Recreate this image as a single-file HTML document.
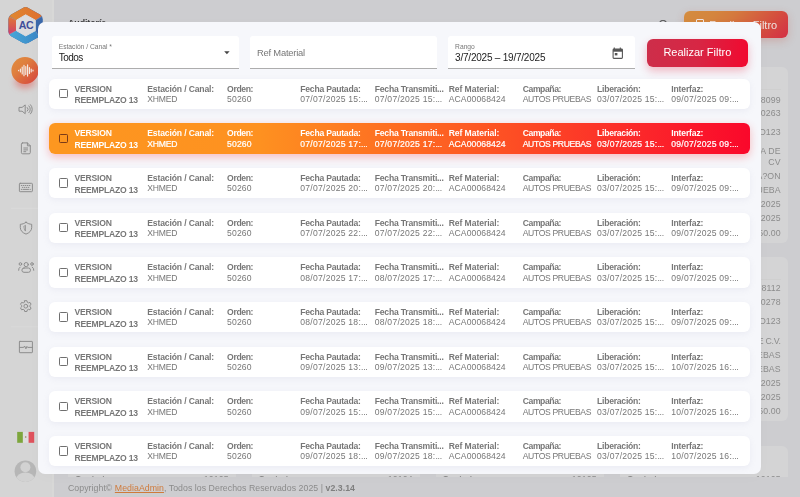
<!DOCTYPE html>
<html lang="es">
<head>
<meta charset="utf-8">
<title>Auditoría</title>
<style>
*{box-sizing:border-box;margin:0;padding:0}
html,body{width:800px;height:497px;overflow:hidden}
body{position:relative;background:#cdcdd0;font-family:"Liberation Sans",sans-serif;color:#777}
.side{position:absolute;left:0;top:0;width:54px;height:497px;background:#d5d5d5;border-right:2px solid #d8d8d7}
.content-bg{position:absolute;left:54px;top:0;width:746px;height:497px;background:#cdcdd0}
.title{will-change:transform;position:absolute;left:68.2px;top:17.3px;font-size:8.8px;line-height:12px;font-weight:700;color:#3c3c3e;letter-spacing:-.05px}
.bgbtn{will-change:transform;position:absolute;left:683.5px;top:11px;width:104.2px;height:27px;border-radius:6px;background:linear-gradient(135deg,#d48c3e 0%,#d4853e 25%,#d4783e 42%,#d4503e 73%,#d43e42 87%,#d43044 100%);box-shadow:0 3px 8px rgba(200,80,60,.25);color:#eee3e0;font-size:11px;line-height:28.8px;text-align:right;padding-right:11px}
.bgbtn i{position:absolute;left:12px;top:8px;width:8px;height:9px;border:1px solid #eee3e0;border-radius:1px}
.srch{position:absolute;left:659.4px;top:19.8px;width:7.4px;height:7.4px;border:1.3px solid #3c3c3e;border-radius:50%}
.card{will-change:transform;position:absolute;background:#d4d4d5;border-radius:6px}
.card span{position:absolute;right:7.3px;font-size:8.75px;line-height:10px;color:#8c8c8c;white-space:nowrap;letter-spacing:.1px}
.card span.n{letter-spacing:-.25px}
.card b{position:absolute;top:27.9px;font-size:8.75px;line-height:10px;color:#868686;letter-spacing:-.2px}
.card u{position:absolute;left:7px;right:7px;height:1px;background:#cfcfcf}
.footer{will-change:transform;position:absolute;left:54px;top:477.4px;width:746px;height:20px;background:#cdcdd0}
.footer p{position:absolute;left:14px;top:5.8px;font-size:8.75px;line-height:10px;color:#8b8b8b;white-space:nowrap;letter-spacing:.047px}
.footer b{color:#7f7f7f}
.footer a{color:#cf7a3a;text-decoration:underline}
.modal{will-change:transform;position:absolute;left:38.3px;top:22.25px;width:723px;height:451.7px;background:#f6f7fb;border-radius:7px;box-shadow:0 3px 14px rgba(0,0,0,.02);overflow:hidden}
.fld{position:absolute;top:13.75px;height:33px;width:187px;background:#fff;border-radius:3px 3px 0 0;border-bottom:1px solid #adadad}
.fld .lab{position:absolute;left:7px;top:6.8px;font-size:6.7px;line-height:8px;color:#777;white-space:nowrap}
.fld .val{position:absolute;left:7px;top:16px;font-size:10px;line-height:12px;color:#222;white-space:nowrap;letter-spacing:-.22px}
.fld .ph{position:absolute;left:7px;top:11.6px;font-size:9.4px;line-height:12px;color:#777;white-space:nowrap;letter-spacing:-.22px}
.btn{position:absolute;left:608.7px;top:17px;width:101.3px;height:28px;border-radius:6px;background:linear-gradient(98deg,#cd2e4a 0%,#d72644 50%,#f2082f 100%);box-shadow:0 4px 9px rgba(225,40,70,.3);color:#fff;font-size:11px;line-height:27.5px;text-align:center}
.row{position:absolute;left:10.7px;width:701px;height:30.6px;background:#fff;border-radius:6px;box-shadow:0 2px 6px rgba(160,160,190,.12)}
.row.sel{background:linear-gradient(90deg,#fd9720 0%,#fe9120 30%,#fe6c22 50%,#fd4d24 66.5%,#fc2a2a 83%,#fa082b 100%);box-shadow:0 3px 9px rgba(250,60,65,.32)}
.cb{position:absolute;left:10px;top:10.6px;width:9.2px;height:9.2px;border:1.1px solid #6f6f6f;border-radius:1.3px}
.sel .cb{border-color:#7a3a18}
.t{position:absolute;font-size:8.6px;line-height:10px;white-space:pre;color:#777;font-weight:700}
.t.v{font-weight:400;color:#777}
.sel .t,.sel .t.v{color:#fff}
.sel .t.v{-webkit-text-stroke:.22px #fff}
.t s{text-decoration:none;letter-spacing:-.25px}
</style>
</head>
<body>
<div class="side"><svg class="sidesvg" width="54" height="497" viewBox="0 0 54 497">
<defs>
<linearGradient id="gL" x1="0" y1="0" x2="0" y2="1"><stop offset="0" stop-color="#df7f33"/><stop offset=".55" stop-color="#d8584f"/><stop offset="1" stop-color="#c9377f"/></linearGradient>
<linearGradient id="gT" x1="0" y1="0" x2="1" y2="0"><stop offset="0" stop-color="#e08a30"/><stop offset="1" stop-color="#df6d2f"/></linearGradient>
<linearGradient id="gB" x1="0" y1="0" x2="1" y2="0"><stop offset="0" stop-color="#49abd9"/><stop offset="1" stop-color="#3a86c6"/></linearGradient>
<linearGradient id="gA" x1="0" y1="0" x2="1" y2="1"><stop offset="0" stop-color="#e18d3f"/><stop offset=".35" stop-color="#df803e"/><stop offset="1" stop-color="#d6413e"/></linearGradient>
<filter id="bl" x="-50%" y="-50%" width="200%" height="200%"><feGaussianBlur stdDeviation="3"/></filter>
</defs>
<!-- logo -->
<clipPath id="hx"><path d="M22.82 7.88 Q25.60 6.30 28.38 7.88 L40.02 14.52 Q42.80 16.10 42.80 19.30 L42.80 31.50 Q42.80 34.70 40.01 36.27 L28.39 42.83 Q25.60 44.40 22.81 42.83 L11.19 36.27 Q8.40 34.70 8.40 31.50 L8.40 19.30 Q8.40 16.10 11.18 14.52 Z"/></clipPath>
<g clip-path="url(#hx)">
<rect x="6" y="4" width="40" height="42" fill="#3a68aa"/>
<path d="M6 14 L25.6 3 L45 14 L35.2 20.3 L25.6 15 L16.6 20.3 Z" fill="url(#gT)"/>
<path d="M6 14.6 L16.6 20.3 L16.6 30.6 L6 36.500 Z" fill="url(#gL)"/>
<path d="M6 36.400 L16.600 30.600 L25.600 35.700 L35.200 30.600 L39.500 37 L25.600 46 Z" fill="url(#gB)"/>
<path d="M8.400 16.100 L16.600 20.300 M8.400 34.700 L16.600 30.600 M35.200 20.300 L42.800 16.100 M35.200 30.600 L39.300 36.800" stroke="#e8c8b8" stroke-opacity=".35" stroke-width=".7" fill="none"/>
</g>
<path d="M25.600 14.800 L35.300 20.200 L35.300 30.700 L25.600 35.900 L16.500 30.700 L16.500 20.200 Z" fill="#dcdcde" stroke="#dcdcde" stroke-width="1" stroke-linejoin="round"/>
<text x="25.900" y="29.100" text-anchor="middle" font-family="Liberation Sans, sans-serif" font-weight="700" font-size="10.600" letter-spacing="-0.400" fill="#3f4e9a">AC</text>
<!-- active item -->
<ellipse cx="25" cy="82" rx="10.500" ry="6.500" fill="#e0605a" opacity=".55" filter="url(#bl)"/>
<circle cx="25" cy="70.500" r="13.600" fill="url(#gA)"/>
<g stroke="#f5ebe6" stroke-width="1.150" stroke-linecap="round">
<path d="M18.600 70.400v.300M20.400 69.100v2.800M22.200 67v7M24 65.200v10.600M25.800 66.500v8M27.600 64.900v11.200M29.400 67.600v5.800M31.200 69v3M33 70.100v.800"/>
</g>
<!-- icons -->
<g fill="none" stroke="#8d8d8d" stroke-width="1" stroke-linejoin="round" stroke-linecap="round">
<!-- speaker -->
<path d="M19.400 107.400h2.700l3.100-2.500v8.800l-3.100-2.500h-2.700z"/>
<path d="M27.300 107.500a2.400 2.400 0 0 1 0 3.600M28.900 105.900a4.600 4.600 0 0 1 0 6.800M30.500 104.700a6.600 6.600 0 0 1 0 9.200"/>
<!-- document -->
<path d="M22.6 142.9h4.8l2.9 2.9v6.8a1.2 1.2 0 0 1-1.2 1.200h-6.500a1.200 1.200 0 0 1-1.200-1.200v-8.500a1.200 1.200 0 0 1 1.200-1.200z"/>
<path d="M27.400 142.900v2.900h2.900M23.800 148h3.800M23.800 149.900h3.800M23.800 151.700h2"/>
<!-- keyboard -->
<rect x="19.400" y="183.300" width="13" height="8.400" rx=".8"/>
<path d="M21.300 185.500h.6M23.300 185.500h.6M25.300 185.500h.6M27.300 185.500h.6M29.300 185.500h.6M22.300 187.400h.6M24.300 187.400h.6M26.300 187.400h.6M28.300 187.400h.6M21.300 189.400h.4M23 189.400h5.500M30 189.400h.4"/>
<!-- shield -->
<path d="M26 222.300c1.800 1.300 3.700 1.900 5.700 2v3.200c0 3.100-2.300 5.400-5.700 6.600-3.400-1.200-5.700-3.500-5.700-6.600v-3.200c2-.1 3.900-.7 5.700-2z"/>
<path d="M24.200 226.100c.5-.2 1-.5 1.300-.8v5.800c-.8-.6-1.300-1.500-1.300-2.500z" stroke-width=".8"/>
<!-- users -->
<circle cx="26.200" cy="264.600" r="2.100"/>
<circle cx="20.400" cy="264" r="1.300"/>
<circle cx="32" cy="264" r="1.300"/>
<rect x="21.900" y="268" width="8.600" height="4.300" rx="2.100"/>
<path d="M18.600 270.300a3.400 3.400 0 0 1 1.500-3.200M33.800 270.300a3.400 3.400 0 0 0-1.500-3.200"/>
<!-- gear -->
<circle cx="25.800" cy="306.200" r="1.900"/>
<path d="M24.700 300.700h2.200l.4 1.600 1.100.6 1.600-.5 1.100 1.900-1.200 1.100v1.400l1.200 1.100-1.100 1.900-1.600-.5-1.100.6-.4 1.600h-2.200l-.4-1.600-1.100-.6-1.600.5-1.100-1.900 1.200-1.100v-1.400l-1.200-1.100 1.100-1.900 1.600.5 1.100-.6z"/>
<!-- monitor -->
<rect x="19.400" y="341.400" width="13" height="11.300" rx=".5"/>
<path d="M19.400 347.400h4.300l.9-1.400 1.300 2.800 1-2.400.7 1h4.800"/>
</g>
<path d="M11 208.300H54M11 326.800H54" stroke="#dcdcdc" stroke-width=".7"/>
<!-- flag -->
<rect x="17.200" y="431.900" width="5.700" height="10.900" fill="#7da63c"/>
<rect x="22.900" y="431.900" width="5.700" height="10.900" fill="#dedede"/>
<rect x="28.600" y="431.900" width="5.600" height="10.900" fill="#df525c"/>
<circle cx="25.700" cy="437" r=".8" fill="#9a7a55"/>
<!-- avatar -->
<clipPath id="av"><circle cx="25.400" cy="471.200" r="10.800"/></clipPath>
<circle cx="25.400" cy="471.200" r="10.800" fill="#b6b6b6"/>
<g clip-path="url(#av)" fill="#d2d2d2"><circle cx="25.400" cy="467.300" r="5"/><ellipse cx="25.400" cy="483.600" rx="11" ry="11"/></g>
</svg>
</div>
<div class="content-bg"></div>
<div class="title">Auditoría</div>
<div class="srch"></div>
<div class="bgbtn"><i></i>Realizar Filtro</div>

<div class="card" style="left:620px;top:66.5px;width:168px;height:176px"><u style="top:21.5px"></u><span style="top:27.7px">8099</span><span style="top:41.3px">0263</span><span style="top:60.3px">D123</span><span style="top:79.0px">A DE</span><span style="top:89.5px">CV</span><span style="top:103.9px">A?ON</span><span style="top:118.1px">UEBA</span><span style="top:132.3px">2025</span><span style="top:145.6px">2025</span><span style="top:160.5px">50.00</span></div>
<div class="card" style="left:620px;top:257.2px;width:168px;height:164.4px"><u style="top:21.5px"></u><span style="top:26.2px">8112</span><span style="top:40.3px">0278</span><span style="top:59.1px">D123</span><span class="n" style="top:79.3px">E C.V.</span><span style="top:93.4px">EBAS</span><span style="top:107.2px">EBAS</span><span style="top:121.3px">2025</span><span style="top:135.1px">2025</span><span style="top:149.2px">50.00</span></div>
<div class="card" style="left:68px;top:446.3px;width:168px;height:40px"><b style="left:7px">Contrato</b><span style="top:27.9px">10105</span></div>
<div class="card" style="left:252px;top:446.3px;width:168px;height:40px"><b style="left:6.5px">Contrato</b><span style="top:27.9px">10104</span></div>
<div class="card" style="left:436px;top:446.3px;width:168px;height:40px"><b style="left:6.5px">Contrato</b><span style="top:27.9px">10105</span></div>
<div class="card" style="left:620px;top:446.3px;width:168px;height:40px"><b style="left:7px">Contrato</b><span style="top:27.9px">10105</span></div>
<div class="footer"><p>Copyright© <a>MediaAdmin</a>, Todos los Derechos Reservados 2025 | <b>v2.3.14</b></p></div>

<div class="modal">
  <div class="fld" style="left:13.7px"><span class="lab">Estación / Canal *</span><span class="val" style="letter-spacing:-.5px">Todos</span><svg style="position:absolute;left:172.600px;top:15.200px" width="6" height="4" viewBox="0 0 6 4"><path d="M.2.300h5.400L2.900 3.300z" fill="#444"/></svg></div>
  <div class="fld" style="left:212px"><span class="ph">Ref Material</span></div>
  <div class="fld" style="left:410.100px"><span class="lab">Rango</span><span class="val">3/7/2025 – 19/7/2025</span><svg style="position:absolute;left:163.500px;top:11.200px" width="12" height="13" viewBox="0 0 12 13"><path d="M2.300.600v1.600M8.300.600v1.600" stroke="#555" stroke-width="1.100"/><rect x="1.100" y="2.100" width="9.300" height="9.300" rx=".8" fill="none" stroke="#555" stroke-width="1.100"/><rect x="1.100" y="2.100" width="9.300" height="2.600" fill="#555"/><rect x="2.800" y="6" width="2.600" height="2.400" fill="#555"/></svg></div>
  <div class="btn">Realizar Filtro</div>
<div class="row" style="top:56.50px"><i class="cb"></i><b class="t" style="left:25.75px;top:5.2px;letter-spacing:-0.188px">VERSION</b><b class="t" style="left:25.75px;top:16.9px;letter-spacing:-0.213px">REEMPLAZO 13</b><b class="t" style="left:98.60px;top:5.2px;letter-spacing:-0.147px">Estación / Canal:</b><span class="t v" style="left:98.60px;top:15.6px;letter-spacing:-0.213px">XHMED</span><b class="t" style="left:178.40px;top:5.2px;letter-spacing:-0.365px">Orden:</b><span class="t v" style="left:178.40px;top:15.6px;letter-spacing:0.137px">50260</span><b class="t" style="left:251.60px;top:5.2px;letter-spacing:-0.227px">Fecha Pautada:</b><span class="t v" style="left:251.60px;top:15.6px;letter-spacing:0.243px">07/07/2025 15:<s>...</s></span><b class="t" style="left:326.00px;top:5.2px;letter-spacing:-0.203px">Fecha Transmiti...</b><span class="t v" style="left:326.00px;top:15.6px;letter-spacing:0.243px">07/07/2025 15:<s>...</s></span><b class="t" style="left:400.00px;top:5.2px;letter-spacing:-0.078px">Ref Material:</b><span class="t v" style="left:400.00px;top:15.6px;letter-spacing:0.095px">ACA00068424</span><b class="t" style="left:474.00px;top:5.2px;letter-spacing:-0.399px">Campaña:</b><span class="t v" style="left:474.00px;top:15.6px;letter-spacing:-0.351px">AUTOS PRUEBAS</span><b class="t" style="left:548.40px;top:5.2px;letter-spacing:-0.251px">Liberación:</b><span class="t v" style="left:548.40px;top:15.6px;letter-spacing:0.215px">03/07/2025 15:<s>...</s></span><b class="t" style="left:622.60px;top:5.2px;letter-spacing:-0.163px">Interfaz:</b><span class="t v" style="left:622.60px;top:15.6px;letter-spacing:0.243px">09/07/2025 09:<s>...</s></span></div>
<div class="row sel" style="top:101.17px"><i class="cb"></i><b class="t" style="left:25.75px;top:5.2px;letter-spacing:-0.188px">VERSION</b><b class="t" style="left:25.75px;top:16.9px;letter-spacing:-0.213px">REEMPLAZO 13</b><b class="t" style="left:98.60px;top:5.2px;letter-spacing:-0.147px">Estación / Canal:</b><span class="t v" style="left:98.60px;top:15.6px;letter-spacing:-0.213px">XHMED</span><b class="t" style="left:178.40px;top:5.2px;letter-spacing:-0.365px">Orden:</b><span class="t v" style="left:178.40px;top:15.6px;letter-spacing:0.137px">50260</span><b class="t" style="left:251.60px;top:5.2px;letter-spacing:-0.227px">Fecha Pautada:</b><span class="t v" style="left:251.60px;top:15.6px;letter-spacing:0.243px">07/07/2025 17:<s>...</s></span><b class="t" style="left:326.00px;top:5.2px;letter-spacing:-0.203px">Fecha Transmiti...</b><span class="t v" style="left:326.00px;top:15.6px;letter-spacing:0.243px">07/07/2025 17:<s>...</s></span><b class="t" style="left:400.00px;top:5.2px;letter-spacing:-0.078px">Ref Material:</b><span class="t v" style="left:400.00px;top:15.6px;letter-spacing:0.095px">ACA00068424</span><b class="t" style="left:474.00px;top:5.2px;letter-spacing:-0.399px">Campaña:</b><span class="t v" style="left:474.00px;top:15.6px;letter-spacing:-0.351px">AUTOS PRUEBAS</span><b class="t" style="left:548.40px;top:5.2px;letter-spacing:-0.251px">Liberación:</b><span class="t v" style="left:548.40px;top:15.6px;letter-spacing:0.215px">03/07/2025 15:<s>...</s></span><b class="t" style="left:622.60px;top:5.2px;letter-spacing:-0.163px">Interfaz:</b><span class="t v" style="left:622.60px;top:15.6px;letter-spacing:0.243px">09/07/2025 09:<s>...</s></span></div>
<div class="row" style="top:145.84px"><i class="cb"></i><b class="t" style="left:25.75px;top:5.2px;letter-spacing:-0.188px">VERSION</b><b class="t" style="left:25.75px;top:16.9px;letter-spacing:-0.213px">REEMPLAZO 13</b><b class="t" style="left:98.60px;top:5.2px;letter-spacing:-0.147px">Estación / Canal:</b><span class="t v" style="left:98.60px;top:15.6px;letter-spacing:-0.213px">XHMED</span><b class="t" style="left:178.40px;top:5.2px;letter-spacing:-0.365px">Orden:</b><span class="t v" style="left:178.40px;top:15.6px;letter-spacing:0.137px">50260</span><b class="t" style="left:251.60px;top:5.2px;letter-spacing:-0.227px">Fecha Pautada:</b><span class="t v" style="left:251.60px;top:15.6px;letter-spacing:0.243px">07/07/2025 20:<s>...</s></span><b class="t" style="left:326.00px;top:5.2px;letter-spacing:-0.203px">Fecha Transmiti...</b><span class="t v" style="left:326.00px;top:15.6px;letter-spacing:0.243px">07/07/2025 20:<s>...</s></span><b class="t" style="left:400.00px;top:5.2px;letter-spacing:-0.078px">Ref Material:</b><span class="t v" style="left:400.00px;top:15.6px;letter-spacing:0.095px">ACA00068424</span><b class="t" style="left:474.00px;top:5.2px;letter-spacing:-0.399px">Campaña:</b><span class="t v" style="left:474.00px;top:15.6px;letter-spacing:-0.351px">AUTOS PRUEBAS</span><b class="t" style="left:548.40px;top:5.2px;letter-spacing:-0.251px">Liberación:</b><span class="t v" style="left:548.40px;top:15.6px;letter-spacing:0.215px">03/07/2025 15:<s>...</s></span><b class="t" style="left:622.60px;top:5.2px;letter-spacing:-0.163px">Interfaz:</b><span class="t v" style="left:622.60px;top:15.6px;letter-spacing:0.243px">09/07/2025 09:<s>...</s></span></div>
<div class="row" style="top:190.51px"><i class="cb"></i><b class="t" style="left:25.75px;top:5.2px;letter-spacing:-0.188px">VERSION</b><b class="t" style="left:25.75px;top:16.9px;letter-spacing:-0.213px">REEMPLAZO 13</b><b class="t" style="left:98.60px;top:5.2px;letter-spacing:-0.147px">Estación / Canal:</b><span class="t v" style="left:98.60px;top:15.6px;letter-spacing:-0.213px">XHMED</span><b class="t" style="left:178.40px;top:5.2px;letter-spacing:-0.365px">Orden:</b><span class="t v" style="left:178.40px;top:15.6px;letter-spacing:0.137px">50260</span><b class="t" style="left:251.60px;top:5.2px;letter-spacing:-0.227px">Fecha Pautada:</b><span class="t v" style="left:251.60px;top:15.6px;letter-spacing:0.243px">07/07/2025 22:<s>...</s></span><b class="t" style="left:326.00px;top:5.2px;letter-spacing:-0.203px">Fecha Transmiti...</b><span class="t v" style="left:326.00px;top:15.6px;letter-spacing:0.243px">07/07/2025 22:<s>...</s></span><b class="t" style="left:400.00px;top:5.2px;letter-spacing:-0.078px">Ref Material:</b><span class="t v" style="left:400.00px;top:15.6px;letter-spacing:0.095px">ACA00068424</span><b class="t" style="left:474.00px;top:5.2px;letter-spacing:-0.399px">Campaña:</b><span class="t v" style="left:474.00px;top:15.6px;letter-spacing:-0.351px">AUTOS PRUEBAS</span><b class="t" style="left:548.40px;top:5.2px;letter-spacing:-0.251px">Liberación:</b><span class="t v" style="left:548.40px;top:15.6px;letter-spacing:0.215px">03/07/2025 15:<s>...</s></span><b class="t" style="left:622.60px;top:5.2px;letter-spacing:-0.163px">Interfaz:</b><span class="t v" style="left:622.60px;top:15.6px;letter-spacing:0.243px">09/07/2025 09:<s>...</s></span></div>
<div class="row" style="top:235.18px"><i class="cb"></i><b class="t" style="left:25.75px;top:5.2px;letter-spacing:-0.188px">VERSION</b><b class="t" style="left:25.75px;top:16.9px;letter-spacing:-0.213px">REEMPLAZO 13</b><b class="t" style="left:98.60px;top:5.2px;letter-spacing:-0.147px">Estación / Canal:</b><span class="t v" style="left:98.60px;top:15.6px;letter-spacing:-0.213px">XHMED</span><b class="t" style="left:178.40px;top:5.2px;letter-spacing:-0.365px">Orden:</b><span class="t v" style="left:178.40px;top:15.6px;letter-spacing:0.137px">50260</span><b class="t" style="left:251.60px;top:5.2px;letter-spacing:-0.227px">Fecha Pautada:</b><span class="t v" style="left:251.60px;top:15.6px;letter-spacing:0.243px">08/07/2025 17:<s>...</s></span><b class="t" style="left:326.00px;top:5.2px;letter-spacing:-0.203px">Fecha Transmiti...</b><span class="t v" style="left:326.00px;top:15.6px;letter-spacing:0.243px">08/07/2025 17:<s>...</s></span><b class="t" style="left:400.00px;top:5.2px;letter-spacing:-0.078px">Ref Material:</b><span class="t v" style="left:400.00px;top:15.6px;letter-spacing:0.095px">ACA00068424</span><b class="t" style="left:474.00px;top:5.2px;letter-spacing:-0.399px">Campaña:</b><span class="t v" style="left:474.00px;top:15.6px;letter-spacing:-0.351px">AUTOS PRUEBAS</span><b class="t" style="left:548.40px;top:5.2px;letter-spacing:-0.251px">Liberación:</b><span class="t v" style="left:548.40px;top:15.6px;letter-spacing:0.215px">03/07/2025 15:<s>...</s></span><b class="t" style="left:622.60px;top:5.2px;letter-spacing:-0.163px">Interfaz:</b><span class="t v" style="left:622.60px;top:15.6px;letter-spacing:0.243px">09/07/2025 09:<s>...</s></span></div>
<div class="row" style="top:279.85px"><i class="cb"></i><b class="t" style="left:25.75px;top:5.2px;letter-spacing:-0.188px">VERSION</b><b class="t" style="left:25.75px;top:16.9px;letter-spacing:-0.213px">REEMPLAZO 13</b><b class="t" style="left:98.60px;top:5.2px;letter-spacing:-0.147px">Estación / Canal:</b><span class="t v" style="left:98.60px;top:15.6px;letter-spacing:-0.213px">XHMED</span><b class="t" style="left:178.40px;top:5.2px;letter-spacing:-0.365px">Orden:</b><span class="t v" style="left:178.40px;top:15.6px;letter-spacing:0.137px">50260</span><b class="t" style="left:251.60px;top:5.2px;letter-spacing:-0.227px">Fecha Pautada:</b><span class="t v" style="left:251.60px;top:15.6px;letter-spacing:0.243px">08/07/2025 18:<s>...</s></span><b class="t" style="left:326.00px;top:5.2px;letter-spacing:-0.203px">Fecha Transmiti...</b><span class="t v" style="left:326.00px;top:15.6px;letter-spacing:0.243px">08/07/2025 18:<s>...</s></span><b class="t" style="left:400.00px;top:5.2px;letter-spacing:-0.078px">Ref Material:</b><span class="t v" style="left:400.00px;top:15.6px;letter-spacing:0.095px">ACA00068424</span><b class="t" style="left:474.00px;top:5.2px;letter-spacing:-0.399px">Campaña:</b><span class="t v" style="left:474.00px;top:15.6px;letter-spacing:-0.351px">AUTOS PRUEBAS</span><b class="t" style="left:548.40px;top:5.2px;letter-spacing:-0.251px">Liberación:</b><span class="t v" style="left:548.40px;top:15.6px;letter-spacing:0.215px">03/07/2025 15:<s>...</s></span><b class="t" style="left:622.60px;top:5.2px;letter-spacing:-0.163px">Interfaz:</b><span class="t v" style="left:622.60px;top:15.6px;letter-spacing:0.243px">09/07/2025 09:<s>...</s></span></div>
<div class="row" style="top:324.52px"><i class="cb"></i><b class="t" style="left:25.75px;top:5.2px;letter-spacing:-0.188px">VERSION</b><b class="t" style="left:25.75px;top:16.9px;letter-spacing:-0.213px">REEMPLAZO 13</b><b class="t" style="left:98.60px;top:5.2px;letter-spacing:-0.147px">Estación / Canal:</b><span class="t v" style="left:98.60px;top:15.6px;letter-spacing:-0.213px">XHMED</span><b class="t" style="left:178.40px;top:5.2px;letter-spacing:-0.365px">Orden:</b><span class="t v" style="left:178.40px;top:15.6px;letter-spacing:0.137px">50260</span><b class="t" style="left:251.60px;top:5.2px;letter-spacing:-0.227px">Fecha Pautada:</b><span class="t v" style="left:251.60px;top:15.6px;letter-spacing:0.243px">09/07/2025 13:<s>...</s></span><b class="t" style="left:326.00px;top:5.2px;letter-spacing:-0.203px">Fecha Transmiti...</b><span class="t v" style="left:326.00px;top:15.6px;letter-spacing:0.243px">09/07/2025 13:<s>...</s></span><b class="t" style="left:400.00px;top:5.2px;letter-spacing:-0.078px">Ref Material:</b><span class="t v" style="left:400.00px;top:15.6px;letter-spacing:0.095px">ACA00068424</span><b class="t" style="left:474.00px;top:5.2px;letter-spacing:-0.399px">Campaña:</b><span class="t v" style="left:474.00px;top:15.6px;letter-spacing:-0.351px">AUTOS PRUEBAS</span><b class="t" style="left:548.40px;top:5.2px;letter-spacing:-0.251px">Liberación:</b><span class="t v" style="left:548.40px;top:15.6px;letter-spacing:0.215px">03/07/2025 15:<s>...</s></span><b class="t" style="left:622.60px;top:5.2px;letter-spacing:-0.163px">Interfaz:</b><span class="t v" style="left:622.60px;top:15.6px;letter-spacing:0.243px">10/07/2025 16:<s>...</s></span></div>
<div class="row" style="top:369.19px"><i class="cb"></i><b class="t" style="left:25.75px;top:5.2px;letter-spacing:-0.188px">VERSION</b><b class="t" style="left:25.75px;top:16.9px;letter-spacing:-0.213px">REEMPLAZO 13</b><b class="t" style="left:98.60px;top:5.2px;letter-spacing:-0.147px">Estación / Canal:</b><span class="t v" style="left:98.60px;top:15.6px;letter-spacing:-0.213px">XHMED</span><b class="t" style="left:178.40px;top:5.2px;letter-spacing:-0.365px">Orden:</b><span class="t v" style="left:178.40px;top:15.6px;letter-spacing:0.137px">50260</span><b class="t" style="left:251.60px;top:5.2px;letter-spacing:-0.227px">Fecha Pautada:</b><span class="t v" style="left:251.60px;top:15.6px;letter-spacing:0.243px">09/07/2025 15:<s>...</s></span><b class="t" style="left:326.00px;top:5.2px;letter-spacing:-0.203px">Fecha Transmiti...</b><span class="t v" style="left:326.00px;top:15.6px;letter-spacing:0.243px">09/07/2025 15:<s>...</s></span><b class="t" style="left:400.00px;top:5.2px;letter-spacing:-0.078px">Ref Material:</b><span class="t v" style="left:400.00px;top:15.6px;letter-spacing:0.095px">ACA00068424</span><b class="t" style="left:474.00px;top:5.2px;letter-spacing:-0.399px">Campaña:</b><span class="t v" style="left:474.00px;top:15.6px;letter-spacing:-0.351px">AUTOS PRUEBAS</span><b class="t" style="left:548.40px;top:5.2px;letter-spacing:-0.251px">Liberación:</b><span class="t v" style="left:548.40px;top:15.6px;letter-spacing:0.215px">03/07/2025 15:<s>...</s></span><b class="t" style="left:622.60px;top:5.2px;letter-spacing:-0.163px">Interfaz:</b><span class="t v" style="left:622.60px;top:15.6px;letter-spacing:0.243px">10/07/2025 16:<s>...</s></span></div>
<div class="row" style="top:413.86px"><i class="cb"></i><b class="t" style="left:25.75px;top:5.2px;letter-spacing:-0.188px">VERSION</b><b class="t" style="left:25.75px;top:16.9px;letter-spacing:-0.213px">REEMPLAZO 13</b><b class="t" style="left:98.60px;top:5.2px;letter-spacing:-0.147px">Estación / Canal:</b><span class="t v" style="left:98.60px;top:15.6px;letter-spacing:-0.213px">XHMED</span><b class="t" style="left:178.40px;top:5.2px;letter-spacing:-0.365px">Orden:</b><span class="t v" style="left:178.40px;top:15.6px;letter-spacing:0.137px">50260</span><b class="t" style="left:251.60px;top:5.2px;letter-spacing:-0.227px">Fecha Pautada:</b><span class="t v" style="left:251.60px;top:15.6px;letter-spacing:0.243px">09/07/2025 18:<s>...</s></span><b class="t" style="left:326.00px;top:5.2px;letter-spacing:-0.203px">Fecha Transmiti...</b><span class="t v" style="left:326.00px;top:15.6px;letter-spacing:0.243px">09/07/2025 18:<s>...</s></span><b class="t" style="left:400.00px;top:5.2px;letter-spacing:-0.078px">Ref Material:</b><span class="t v" style="left:400.00px;top:15.6px;letter-spacing:0.095px">ACA00068424</span><b class="t" style="left:474.00px;top:5.2px;letter-spacing:-0.399px">Campaña:</b><span class="t v" style="left:474.00px;top:15.6px;letter-spacing:-0.351px">AUTOS PRUEBAS</span><b class="t" style="left:548.40px;top:5.2px;letter-spacing:-0.251px">Liberación:</b><span class="t v" style="left:548.40px;top:15.6px;letter-spacing:0.215px">03/07/2025 15:<s>...</s></span><b class="t" style="left:622.60px;top:5.2px;letter-spacing:-0.163px">Interfaz:</b><span class="t v" style="left:622.60px;top:15.6px;letter-spacing:0.243px">10/07/2025 16:<s>...</s></span></div>
</div>
</body>
</html>
